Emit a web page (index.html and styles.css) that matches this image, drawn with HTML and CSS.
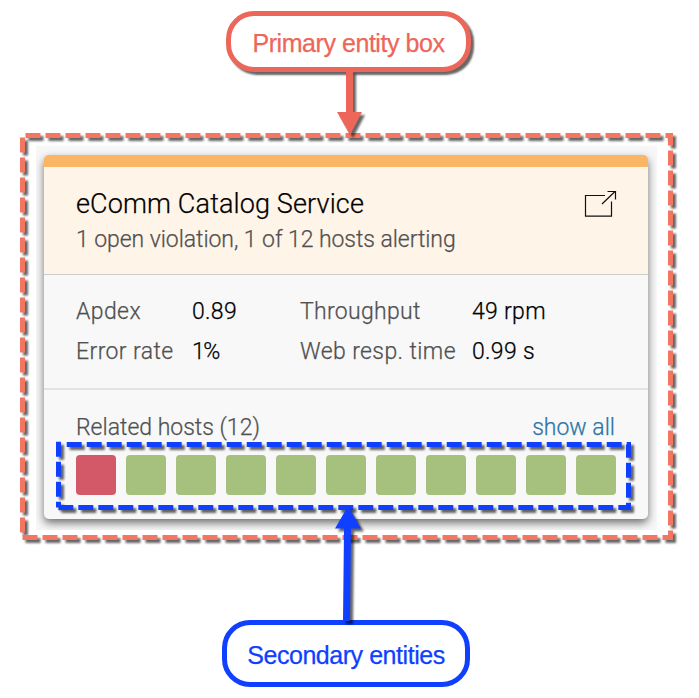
FILE: index.html
```html
<!DOCTYPE html>
<html lang="en">
<head>
<meta charset="utf-8">
<title>Entity box</title>
<link rel="stylesheet" href="styles.css">
</head>
<body>
<main class="diagram">
  <div class="callout callout-primary"><span>Primary entity box</span></div>
  <div class="backdrop">
    <article class="card">
      <header class="card-header">
        <div>
          <h1 class="title"><span>eComm Catalog Service</span></h1>
          <p class="subtitle"><span>1 open violation, 1 of 12 hosts alerting</span></p>
        </div>
        <svg class="open-icon" width="34" height="30" viewBox="0 0 34 30" aria-label="Open">
          <path d="M21 6.5H1.5V27.2H27.5V12.5M18 15L31 2.5M23.5 2.5H31.5V10.5"/>
        </svg>
      </header>
      <dl class="metrics">
        <dt class="wide">Apdex</dt><dd>0.89</dd>
        <dt>Throughput</dt><dd>49 rpm</dd>
        <dt class="wide">Error rate</dt><dd class="tight">1%</dd>
        <dt class="wide">Web resp. time</dt><dd>0.99 s</dd>
      </dl>
      <section class="related">
        <div class="related-head"><span>Related hosts (12)</span><a class="show-all">show all</a></div>
        <div class="hosts">
          <i class="host alert"></i><i class="host"></i><i class="host"></i><i class="host"></i><i class="host"></i><i class="host"></i><i class="host"></i><i class="host"></i><i class="host"></i><i class="host"></i><i class="host"></i>
        </div>
      </section>
    </article>
  </div>
  <div class="callout callout-secondary"><span>Secondary entities</span></div>
  <svg class="annotations" width="699" height="698" viewBox="0 0 699 698">
    <path class="frame frame-primary" d="M25.5 135.5H670.5V537.5H22.5V135.5H25.5"/>
    <g class="frame frame-secondary">
      <path d="M66.7 444.5H628.5V507.5H58.5"/>
      <path d="M58.5 441.7V507.5"/>
    </g>
    <path class="arrow arrow-primary" d="M346 71H353V112H362L350 135L337 112H346Z"/>
    <path class="arrow arrow-secondary" d="M343 621L344 528.5H335L348 506L361 528.5H351L350 621Z"/>
  </svg>
</main>
</body>
</html>
```
FILE: styles.css
```css
* { box-sizing: border-box; }
body { margin: 0; background: #fff; }
h1, p, dl, dd { margin: 0; font-weight: inherit; }

.diagram {
  position: relative;
  width: 699px;
  height: 698px;
  padding-top: 11px;
  overflow: hidden;
  font-family: Roboto, "Open Sans", sans-serif;
  font-weight: 300;
  font-size: 23px;
  color: #505050;
  -webkit-text-stroke: 0.25px;
}

.callout {
  display: flex;
  align-items: center;
  justify-content: center;
  border: 5px solid;
  border-radius: 28px;
  background: #fff;
  font-family: "Liberation Sans", Arial, sans-serif;
  font-weight: 400;
  font-size: 25px;
  letter-spacing: -0.45px;
  white-space: nowrap;
}
.callout-primary {
  width: 245px;
  height: 61px;
  margin-left: 226px;
  padding-top: 3px;
  color: #ed665a;
  box-shadow: 3px 3px 2px rgba(0, 0, 0, .6);
}
.callout-secondary {
  width: 248px;
  height: 67px;
  margin: 90px 0 0 222px;
  padding-top: 3px;
  color: #0f3fff;
}

.backdrop {
  width: 621px;
  height: 384px;
  margin: 74px 0 0 36px;
  padding: 9px 9px 11px 8px;
  background: #f7f7f7;
  overflow: hidden;
}
.card {
  width: 604px;
  height: 364px;
  border-top: 12px solid #fab665;
  border-radius: 5px;
  background: #f8f8f8;
  box-shadow: 0 4px 9px rgba(0, 0, 0, .55);
}
.card-header {
  display: flex;
  justify-content: space-between;
  height: 108px;
  padding: 21px 30px 0 32px;
  border-bottom: 1px solid #ccc;
  background: #fff4e8;
}
.title { font-size: 27px; letter-spacing: 0.13px; line-height: 32px; color: #000; white-space: nowrap; }
.subtitle { margin-top: 5px; letter-spacing: -0.06px; line-height: 30px; white-space: nowrap; }
.open-icon { margin: 1px 0 0; fill: none; stroke: #111; stroke-width: 1.2; }

.metrics {
  display: grid;
  grid-template-columns: 116px 108px 172px 1fr;
  grid-auto-rows: 40px;
  height: 115px;
  padding: 17px 0 0 32px;
  border-bottom: 2px solid #e3e3e3;
  letter-spacing: 0.3px;
  line-height: 40px;
  white-space: nowrap;
}
.metrics dd { color: #000; }
.metrics .wide { letter-spacing: 0.4px; }
.metrics .tight { letter-spacing: -1.6px; }

.related { padding: 22px 33px 0 32px; }
.related-head { display: flex; justify-content: space-between; height: 32px; line-height: 32px; }
.show-all { color: #2a75a9; }
.hosts { display: flex; gap: 10px; margin-top: 11px; }
.host { flex: none; width: 40px; height: 40px; border-radius: 4px; background: #a6c07d; }
.host.alert { background: #d45968; }

.annotations { position: absolute; inset: 0; }
.frame, .arrow { filter: drop-shadow(3px 3px 1px rgba(0, 0, 0, .6)); }
.frame { fill: none; stroke-width: 5; stroke-dasharray: 15 5; }
.frame-primary { stroke: #f37760; }
.frame-secondary { stroke: #0f3fff; }
.arrow-primary { fill: #ed665a; }
.arrow-secondary { fill: #0f3fff; }
```
